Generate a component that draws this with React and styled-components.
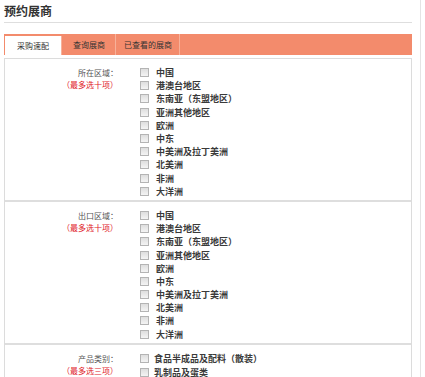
import React from 'react';
import styled, { createGlobalStyle } from 'styled-components';

const GlobalStyle = createGlobalStyle`
  html, body {
    margin: 0;
    padding: 0;
    background: #fff;
    overflow: hidden;
  }
  body {
    font-family: "Noto Sans CJK SC", "Liberation Sans", sans-serif;
    color: #333;
  }
`;

const Page = styled.div`
  width: 421px;
  height: 377px;
  border-right: 1px solid #e4e4e4;
  padding: 0 8px 0 4px;
  box-sizing: border-box;
  overflow: hidden;
`;

const Title = styled.h2`
  margin: 0;
  height: 23px;
  padding-top: 4px;
  box-sizing: border-box;
  font-size: 12px;
  line-height: 14px;
  font-weight: bold;
  color: #333;
  border-bottom: 1px solid #dedede;
`;

const TabBar = styled.div`
  display: flex;
  align-items: flex-end;
  height: 21px;
  margin-top: 11px;
  background: #f38b6c;
  padding-left: 1px;
`;

const Tab = styled.div`
  height: ${p => (p.$active ? '19px' : '21px')};
  padding: 0 ${p => p.$pad}px;
  display: flex;
  align-items: center;
  font-size: 8px;
  color: #333;
  background: ${p => (p.$active ? '#fff' : 'transparent')};
  border-right: 1px solid #f7b19a;
  margin-right: 1px;
  white-space: nowrap;
`;

const Panel = styled.div`
  margin-top: 3px;
  border-top: 1px solid #dcdcdc;
  border-left: 1px solid #dcdcdc;
  border-right: 1px solid #dcdcdc;
`;

const Section = styled.div`
  display: grid;
  grid-template-columns: 113px 1fr;
  padding: 7px 0 2px;
  border-top: ${p => (p.$first ? 'none' : '2px solid #dedede')};
`;

const LabelBox = styled.div`
  text-align: right;
  font-size: 8px;
  line-height: 12px;
  padding-top: 1px;
`;

const Label = styled.div`
  color: #555;
`;

const Hint = styled.div`
  color: #e0211f;
`;

const List = styled.ul`
  list-style: none;
  margin: 0;
  padding: 0 0 0 ${p => p.$indent}px;
`;

const Item = styled.li`
  display: flex;
  align-items: center;
  height: ${p => p.$h}px;
  font-size: 9px;
  font-weight: bold;
  color: #3a3a3a;
`;

const Box = styled.span`
  width: 7px;
  height: 7px;
  border: 1px solid #b4b4b4;
  background: linear-gradient(#dedede, #f4f4f4);
  margin-right: ${p => p.$gap}px;
  flex: none;
`;

const regions = [
  '中国',
  '港澳台地区',
  '东南亚（东盟地区）',
  '亚洲其他地区',
  '欧洲',
  '中东',
  '中美洲及拉丁美洲',
  '北美洲',
  '非洲',
  '大洋洲',
];

const products = ['食品半成品及配料（散装）', '乳制品及蛋类'];

const Group = ({ label, hint, items, first, h = 13.2, gap = 7, indent = 22 }) => (
  <Section $first={first}>
    <LabelBox>
      <Label>{label}</Label>
      <Hint>{hint}</Hint>
    </LabelBox>
    <List $indent={indent}>
      {items.map(t => (
        <Item key={t} $h={h}>
          <Box $gap={gap} />
          {t}
        </Item>
      ))}
    </List>
  </Section>
);

export default function App() {
  return (
    <>
      <GlobalStyle />
      <Page>
        <Title>预约展商</Title>
        <TabBar>
          <Tab $active $pad={12}>采购速配</Tab>
          <Tab $pad={10}>查询展商</Tab>
          <Tab $pad={7}>已查看的展商</Tab>
        </TabBar>
        <Panel>
          <Group first label="所在区域：" hint="（最多选十项）" items={regions} />
          <Group label="出口区域：" hint="（最多选十项）" items={regions} />
          <Group label="产品类别：" hint="（最多选三项）" items={products} h={13.5} gap={5} />
        </Panel>
      </Page>
    </>
  );
}
